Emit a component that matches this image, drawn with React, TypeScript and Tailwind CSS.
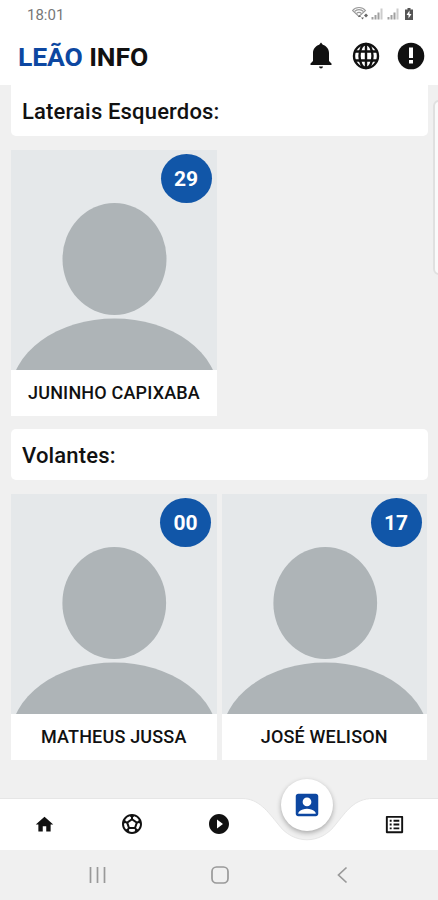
import {
  MdAccountBox,
  MdHome,
  MdListAlt,
  MdPlayCircleFilled,
  MdSportsSoccer,
} from "react-icons/md";

interface Player {
  name: string;
  number: string;
}

const laterais: Player[] = [{ name: "JUNINHO CAPIXABA", number: "29" }];

const volantes: Player[] = [
  { name: "MATHEUS JUSSA", number: "00" },
  { name: "JOSÉ WELISON", number: "17" },
];

function StatusBar() {
  return (
    <div className="h-7 flex items-center justify-between pl-[27px] pr-[24px] text-[#777]">
      <span className="pt-px text-[15px] leading-7">18:01</span>
      <svg width="62" height="16" viewBox="0 0 62 16" fill="none">
        <g stroke="#999" strokeWidth="1.1">
          <path d="M0.500 4.500C4 0.500 10 0.500 13.500 4.500L7 10.500Z" />
          <path d="M2.500 5.500C5 3 9 3 11.500 5.500" />
          <path d="M4.500 7.500C6 6 8 6 9.500 7.500" />
        </g>
        <path d="M6 11l1.500-2 1.500 2zM9 11.500h3l-1.500 2zM12 9.500l2-2 2 2-2 2z" fill="#666" />
        <g fill="#a0a0a0">
          <path d="M19.500 11h2v2.500h-2zM22.500 9h2v4.500h-2zM25.500 6.500h2v7h-2z" />
          <path d="M35.500 11h2v2.500h-2zM38.500 9h2v4.500h-2zM41.500 6.500h2v7h-2z" />
        </g>
        <path d="M28.500 2.500h2v11h-2zM44.500 2.500h2v11h-2z" fill="#ccc" />
        <path d="M53 3.500h2.500V2h3v1.500H61v10.500H53z" fill="#555" />
        <path d="M57.500 4.500l-3 4.500h2v3.500l3-4.500h-2z" fill="#fff" />
      </svg>
    </div>
  );
}

function BellIcon() {
  return (
    <svg width="22" height="28" viewBox="0 0 22 28" fill="currentColor">
      <path d="M11 0.500L12.800 2.700C16.700 4 19 7 19 11V19L21.500 21.500V23H0.500V21.500L3 19V11C3 7 5.300 4 9.200 2.700Z" />
      <path d="M9 24.500H13C12.800 25.800 12 26.500 11 26.500S9.200 25.800 9 24.500Z" />
    </svg>
  );
}

function GlobeIcon() {
  return (
    <svg
      width="28"
      height="28"
      viewBox="0 0 28 28"
      fill="none"
      stroke="currentColor"
      strokeWidth="2.400"
    >
      <circle cx="14" cy="14" r="12" />
      <ellipse cx="14" cy="14" rx="6.500" ry="12" />
      <path d="M14 2V26M2.500 9.500H25.500M2.500 18.500H25.500" />
    </svg>
  );
}

function AlertIcon() {
  return (
    <svg width="28" height="28" viewBox="0 0 28 28" fill="none">
      <circle cx="14" cy="14" r="13.300" fill="currentColor" />
      <path d="M12 5.500H16V16H12ZM12 18H16V21.500H12Z" fill="#fff" />
    </svg>
  );
}

function Header() {
  return (
    <header className="h-[57px] flex items-center justify-between pl-[18px] pr-[13px]">
      <h1 className="pt-px text-[26.500px] leading-none tracking-[-0.1px] font-bold text-[#111]">
        <span className="text-[#0d47a1]">LEÃO</span> INFO
      </h1>
      <div className="flex items-center pb-px text-[#111]">
        <BellIcon />
        <span className="ml-[20px]">
          <GlobeIcon />
        </span>
        <span className="ml-[17px]">
          <AlertIcon />
        </span>
      </div>
    </header>
  );
}

function Avatar() {
  return (
    <svg
      className="block w-full h-[220px] bg-[#e5e8ea]"
      viewBox="0 0 206 220"
      preserveAspectRatio="none"
      fill="#aeb4b7"
    >
      <ellipse cx="103.500" cy="109" rx="52" ry="56" />
      <ellipse cx="103.500" cy="244.500" rx="104" ry="76" />
    </svg>
  );
}

function PlayerCard({ name, number }: Player) {
  return (
    <div className="relative w-[206px] bg-white">
      <Avatar />
      <span className="absolute top-[4px] right-[5.500px] w-[51px] h-[49px] rounded-[50%] bg-[#1156a8] text-white text-[21px] font-bold flex items-center justify-center pt-[2px]">
        {number}
      </span>
      <p className="h-[46px] pb-px flex items-center justify-center text-[18px] tracking-[0.18px] font-medium text-[#111] whitespace-nowrap">
        {name}
      </p>
    </div>
  );
}

function SectionTitle({ title }: { title: string }) {
  return (
    <h2 className="h-[51px] pl-[11px] pt-[2px] flex items-center text-[22px] tracking-[0.17px] font-medium text-[#111]">
      {title}
    </h2>
  );
}

function PlayerRow({ players }: { players: Player[] }) {
  return (
    <div className="flex gap-[5px]">
      {players.map((p) => (
        <PlayerCard key={p.name} {...p} />
      ))}
    </div>
  );
}

function TabBar() {
  return (
    <nav className="relative h-[52px]">
      <svg
        className="absolute inset-0 w-full h-full overflow-hidden"
        viewBox="0 0 438 52"
        fill="#fff"
      >
        <path
          d="M-2 0.500H242C259 0.500 268 14 278 26C293 47 321 47 336 26C346 14 354 0.500 373 0.500H440V54H-2Z"
          stroke="#e6e6e6"
          strokeWidth="1"
        />
      </svg>
      <div className="relative h-full grid grid-cols-5 place-items-center pl-px text-[#111]">
        <MdHome size={21} />
        <MdSportsSoccer size={24} />
        <MdPlayCircleFilled size={24} />
        <span className="relative -top-[19px] w-[52px] h-[52px] rounded-full bg-white shadow-[0_2px_5px_rgba(0,0,0,0.3)] flex items-center justify-center text-[#0d47a1]">
          <MdAccountBox size={30} />
        </span>
        <MdListAlt size={23} />
      </div>
    </nav>
  );
}

function SystemBar() {
  return (
    <div className="h-[50px] bg-[#f0f0f0] flex justify-center">
      <svg
        width="438"
        height="50"
        viewBox="0 0 438 50"
        fill="none"
        stroke="#999"
        strokeWidth="1.700"
      >
        <path d="M90.500 17V33M97.500 17V33M104.500 17V33" />
        <rect x="212" y="17" width="16" height="16" rx="4.500" />
        <path d="M346.500 17.500L338.500 25L346.500 32.500" />
      </svg>
    </div>
  );
}

export default function App() {
  return (
    <div className="relative w-[438px] h-[900px] overflow-hidden bg-[#f0f0f0] font-[Roboto,sans-serif] flex flex-col">
      <div className="bg-white">
        <StatusBar />
        <Header />
      </div>
      <main className="flex-1 min-h-0 overflow-hidden px-[11px] flex flex-col">
        <div className="w-[417px] rounded-b-[5px] bg-white">
          <SectionTitle title="Laterais Esquerdos:" />
        </div>
        <div className="mt-[14px]">
          <PlayerRow players={laterais} />
        </div>
        <div className="mt-[13px] w-[417px] rounded-[5px] bg-white">
          <SectionTitle title="Volantes:" />
        </div>
        <div className="mt-[14px]">
          <PlayerRow players={volantes} />
        </div>
      </main>
      <TabBar />
      <SystemBar />
      <div className="absolute top-[100px] -right-[10px] w-[15px] h-[175px] rounded-[6px] bg-[#fafafa] border-2 border-[#e0e0e0]" />
    </div>
  );
}
